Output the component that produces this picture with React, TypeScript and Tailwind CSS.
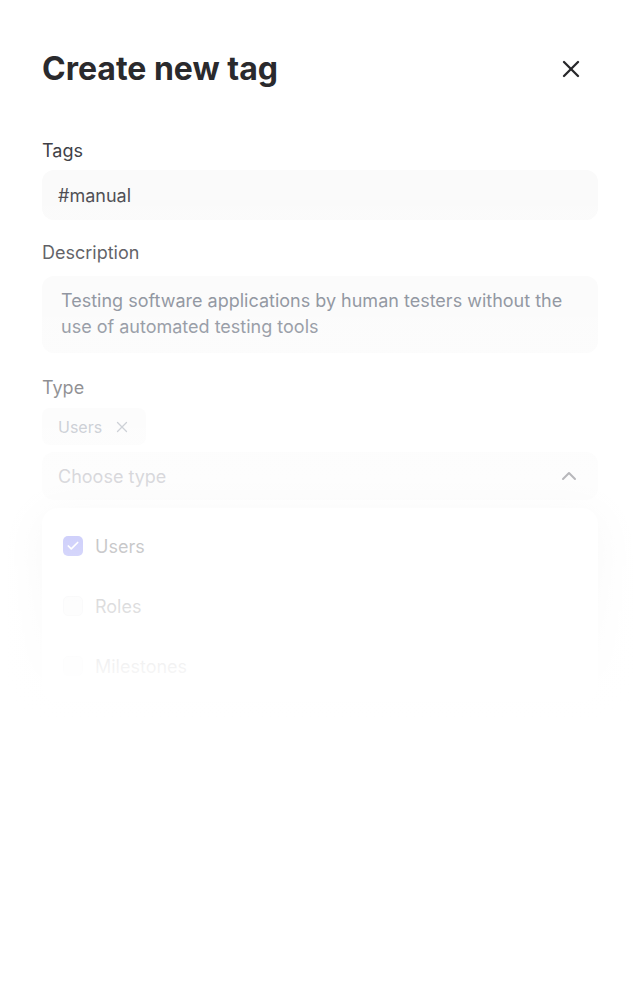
import { X, ChevronUp, Check } from 'lucide-react';

const options = [
  { label: 'Users', checked: true },
  { label: 'Roles', checked: false },
  { label: 'Milestones', checked: false },
];

const App = () => {
  return (
    <div className="relative min-h-[1006px] w-full overflow-hidden bg-white font-['Inter',sans-serif]">
      <div className="px-[42px] pt-[49px]">
        {/* Header */}
        <div className="flex h-10 items-center justify-between">
          <h1 className="text-[32px] font-bold leading-10 text-[#2a2a2d]">Create new tag</h1>
          <button className="mr-[13px] text-[#27272a]">
            <X className="h-7 w-7" strokeWidth={2} />
          </button>
        </div>

        {/* Tags */}
        <label className="mt-[48px] block text-[18px] leading-7 text-[#3f3f46]">Tags</label>
        <div className="mt-[5px] flex h-[50px] items-center rounded-xl bg-[#fafafa] px-4 text-[18px] text-[#3f3f46]">
          #manual
        </div>

        {/* Description */}
        <label className="mt-[19px] block text-[18px] leading-7 text-[#3f3f46]">Description</label>
        <div className="mt-[9px] rounded-xl bg-[#fafafa] pb-[13px] pl-[19px] pr-4 pt-3 text-[18px] leading-[26px] text-[#6b7280]">
          Testing software applications by human testers without the use of automated testing tools
        </div>

        {/* Type */}
        <label className="mt-[21px] block text-[18px] leading-7 text-[#3f3f46]">Type</label>
        <div className="mt-[6px] flex h-[37px] w-[104px] items-center gap-[11px] rounded-lg bg-[#fafafa] pl-4 text-[16px] text-[#9ca3af]">
          Users
          <X className="h-[18px] w-[18px]" strokeWidth={1.75} />
        </div>
        <div className="mt-[7px] flex h-12 items-center justify-between rounded-xl bg-[#fafafa] pl-4 pr-[17px] text-[18px] text-[#a1a1aa]">
          Choose type
          <ChevronUp className="h-6 w-6 text-[#52525b]" strokeWidth={2} />
        </div>

        {/* Dropdown */}
        <div className="mt-2 rounded-2xl bg-white pb-[6px] pt-2 shadow-[0_10px_40px_rgba(0,0,0,0.1)]">
          {options.map((opt) => (
            <div key={opt.label} className="flex h-[60px] items-center gap-3 px-[21px]">
              <span
                className={
                  opt.checked
                    ? 'flex h-5 w-5 items-center justify-center rounded-[5px] bg-[#6366f1]'
                    : 'h-5 w-5 rounded-[5px] border border-[#e4e4e7] bg-[#f4f4f5]'
                }
              >
                {opt.checked && <Check className="h-[14px] w-[14px] text-white" strokeWidth={3} />}
              </span>
              <span className="text-[18px] text-[#3f3f46]">{opt.label}</span>
            </div>
          ))}
        </div>
      </div>

      {/* Fade overlay */}
      <div className="pointer-events-none absolute inset-0 bg-[linear-gradient(to_bottom,rgba(255,255,255,0)_150px,rgba(255,255,255,0.7)_540px,rgba(255,255,255,0.98)_690px,#fff_720px)]" />
    </div>
  );
};

export default App;
